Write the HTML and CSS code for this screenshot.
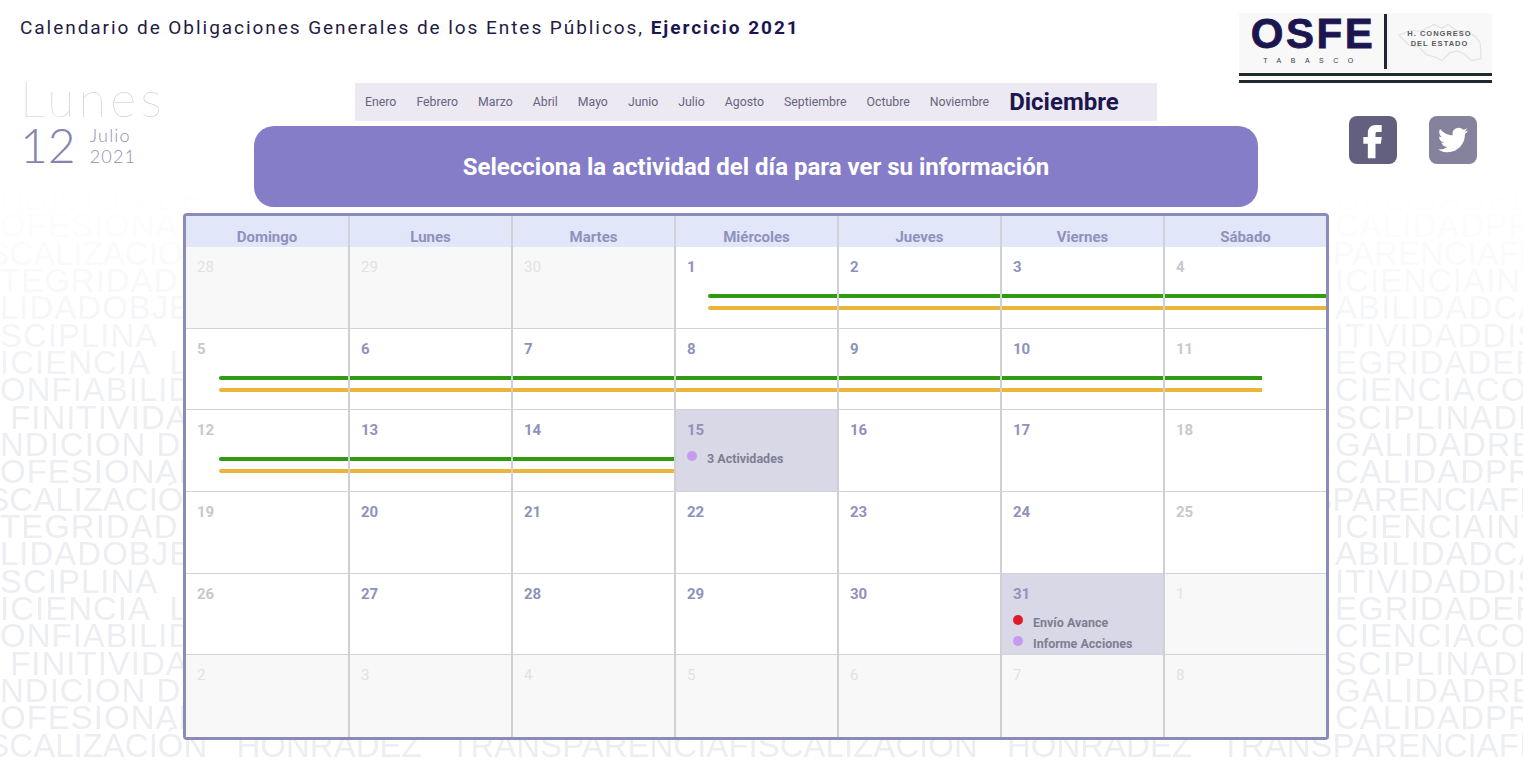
FILE: index.html
```html
<!DOCTYPE html>
<html lang="es">
<head>
<meta charset="utf-8">
<title>Calendario de Obligaciones</title>
<link rel="stylesheet" href="styles.css">
</head>
<body>
<div class="page">
  <div class="watermark" aria-hidden="true">
    <div class="wm-row"><span>NDICION DE</span><span>GALIDADRE</span></div>
    <div class="wm-row"><span>OFESIONAL</span><span>CALIDADPRO</span></div>
    <div class="wm-full">FISCALIZACIÓN HONRADEZ TRANSPARENCIAFISCALIZACIÓN HONRADEZ TRANSPARENCIAFISCALIZACIÓN</div>
    <div class="wm-row"><span>TEGRIDAD L</span><span>ICIENCIAINT</span></div>
    <div class="wm-row"><span>LIDADOBJE</span><span>ABILIDADCA</span></div>
    <div class="wm-row"><span>SCIPLINA &nbsp; I</span><span>ITIVIDADDIS</span></div>
    <div class="wm-row"><span>ICIENCIA &nbsp;LI</span><span>EGRIDADEFI</span></div>
    <div class="wm-row"><span>ONFIABILID</span><span>CIENCIACO</span></div>
    <div class="wm-row"><span>&nbsp;FINITIVIDA</span><span>SCIPLINADE</span></div>
    <div class="wm-row"><span>NDICION DE</span><span>GALIDADRE</span></div>
    <div class="wm-row"><span>OFESIONAL</span><span>CALIDADPRO</span></div>
    <div class="wm-full">FISCALIZACIÓN HONRADEZ TRANSPARENCIAFISCALIZACIÓN HONRADEZ TRANSPARENCIAFISCALIZACIÓN</div>
    <div class="wm-row"><span>TEGRIDAD L</span><span>ICIENCIAINT</span></div>
    <div class="wm-row"><span>LIDADOBJE</span><span>ABILIDADCA</span></div>
    <div class="wm-row"><span>SCIPLINA &nbsp; I</span><span>ITIVIDADDIS</span></div>
    <div class="wm-row"><span>ICIENCIA &nbsp;LI</span><span>EGRIDADEFI</span></div>
    <div class="wm-row"><span>ONFIABILID</span><span>CIENCIACO</span></div>
    <div class="wm-row"><span>&nbsp;FINITIVIDA</span><span>SCIPLINADE</span></div>
    <div class="wm-row"><span>NDICION DE</span><span>GALIDADRE</span></div>
    <div class="wm-row"><span>OFESIONAL</span><span>CALIDADPRO</span></div>
    <div class="wm-full">FISCALIZACIÓN HONRADEZ TRANSPARENCIAFISCALIZACIÓN HONRADEZ TRANSPARENCIAFISCALIZACIÓN</div>
    <div class="wm-last">INTEGRIDAD LEGALIDAD SECRECIA EFICIENCIAINTEGRIDAD LEGALIDAD SECRECIA EFICIENCIAINTEGRIDAD</div>
  </div>

  <header class="top">
    <h1 class="title">Calendario de Obligaciones Generales de los Entes Públicos, <strong>Ejercicio 2021</strong></h1>
    <div class="logo">
      <div class="logo-main">
        <div class="logo-osfe">
          <span class="osfe-word">OSFE</span>
          <span class="osfe-sub">TABASCO</span>
        </div>
        <div class="logo-divider"></div>
        <div class="logo-congreso">
          <svg class="logo-map" viewBox="0 0 90 44" aria-hidden="true"><path d="M2 14 L14 9 L24 10 L38 3 L46 7 L52 3 L60 9 L70 10 L80 15 L85 22 L86 38 L76 40 L70 34 L62 30 L54 32 L46 40 L38 36 L30 34 L22 26 L12 24 Z"/></svg>
          <span class="congreso-text">H. CONGRESO<br>DEL ESTADO</span>
        </div>
      </div>
      <div class="logo-rules"></div>
    </div>
  </header>

  <section class="middle">
    <div class="date">
      <div class="date-day">Lunes</div>
      <div class="date-row">
        <span class="date-num">12</span>
        <span class="date-rest">Julio<br>2021</span>
      </div>
    </div>
    <div class="center">
      <nav class="months">
        <span>Enero</span><span>Febrero</span><span>Marzo</span><span>Abril</span><span>Mayo</span><span>Junio</span><span>Julio</span><span>Agosto</span><span>Septiembre</span><span>Octubre</span><span>Noviembre</span><span class="month-active">Diciembre</span>
      </nav>
      <div class="banner">Selecciona la actividad del día para ver su información</div>
    </div>
    <div class="social">
      <a class="social-btn fb" aria-label="Facebook">
        <svg viewBox="0 0 24 24"><path d="M14.2 8.2h3V4h-3.4C10.6 4 8.9 6 8.9 8.9v2.3H6.2v4.1h2.7V24h4.6v-8.7h3.2l.6-4.1h-3.8V9.3c0-.7.4-1.1 1.1-1.1z" transform="translate(0 -1)"/></svg>
      </a>
      <a class="social-btn tw" aria-label="Twitter">
        <svg viewBox="0 0 24 24"><path d="M23.953 4.57a10 10 0 01-2.825.775 4.958 4.958 0 002.163-2.723c-.951.555-2.005.959-3.127 1.184a4.92 4.92 0 00-8.384 4.482C7.69 8.095 4.067 6.13 1.64 3.162a4.822 4.822 0 00-.666 2.475c0 1.71.87 3.213 2.188 4.096a4.904 4.904 0 01-2.228-.616v.06a4.923 4.923 0 003.946 4.827 4.996 4.996 0 01-2.212.085 4.936 4.936 0 004.604 3.417 9.867 9.867 0 01-6.102 2.105c-.39 0-.779-.023-1.17-.067a13.995 13.995 0 007.557 2.209c9.053 0 13.998-7.496 13.998-13.985 0-.21 0-.42-.015-.63A9.935 9.935 0 0024 4.59z"/></svg>
      </a>
    </div>
  </section>

  <main class="calendar">
    <div class="cal-head">
      <div>Domingo</div><div>Lunes</div><div>Martes</div><div>Miércoles</div><div>Jueves</div><div>Viernes</div><div>Sábado</div>
    </div>
    <div class="week">
      <i class="bar bar-green w1"></i><i class="bar bar-yellow w1"></i>
      <div class="cell out"><b>28</b></div><div class="cell out"><b>29</b></div><div class="cell out"><b>30</b></div>
      <div class="cell"><b>1</b></div><div class="cell"><b>2</b></div><div class="cell"><b>3</b></div><div class="cell off"><b>4</b></div>
    </div>
    <div class="week">
      <i class="bar bar-green w2"></i><i class="bar bar-yellow w2"></i>
      <div class="cell off"><b>5</b></div><div class="cell"><b>6</b></div><div class="cell"><b>7</b></div><div class="cell"><b>8</b></div><div class="cell"><b>9</b></div><div class="cell"><b>10</b></div><div class="cell off"><b>11</b></div>
    </div>
    <div class="week">
      <i class="bar bar-green w3"></i><i class="bar bar-yellow w3"></i>
      <div class="cell off"><b>12</b></div><div class="cell"><b>13</b></div><div class="cell"><b>14</b></div>
      <div class="cell active"><b>15</b><ul class="events"><li class="purple">3 Actividades</li></ul></div>
      <div class="cell"><b>16</b></div><div class="cell"><b>17</b></div><div class="cell off"><b>18</b></div>
    </div>
    <div class="week">
      <div class="cell off"><b>19</b></div><div class="cell"><b>20</b></div><div class="cell"><b>21</b></div><div class="cell"><b>22</b></div><div class="cell"><b>23</b></div><div class="cell"><b>24</b></div><div class="cell off"><b>25</b></div>
    </div>
    <div class="week">
      <div class="cell off"><b>26</b></div><div class="cell"><b>27</b></div><div class="cell"><b>28</b></div><div class="cell"><b>29</b></div><div class="cell"><b>30</b></div>
      <div class="cell active"><b>31</b><ul class="events"><li class="red">Envío Avance</li><li class="purple">Informe Acciones</li></ul></div>
      <div class="cell out"><b>1</b></div>
    </div>
    <div class="week last">
      <div class="cell out"><b>2</b></div><div class="cell out"><b>3</b></div><div class="cell out"><b>4</b></div><div class="cell out"><b>5</b></div><div class="cell out"><b>6</b></div><div class="cell out"><b>7</b></div><div class="cell out"><b>8</b></div>
    </div>
  </main>
</div>
</body>
</html>
```

FILE: styles.css
```css
* { box-sizing: border-box; }
html, body { margin: 0; padding: 0; background: #fff; }
body { font-family: Roboto, "Noto Sans", sans-serif; }

.page { position: relative; width: 1523px; height: 761px; overflow: hidden; }

/* Decorative word texture behind everything */
.watermark {
  position: absolute; left: 0; right: 0; top: 185px; bottom: 0;
  font-family: "Liberation Sans", Arial, sans-serif;
  font-size: 33px; line-height: 27.33px; color: #eceef2;
  white-space: nowrap; overflow: hidden;
  -webkit-mask-image: linear-gradient(to bottom, transparent 0, rgba(0,0,0,.35) 90px, #000 240px);
  mask-image: linear-gradient(to bottom, transparent 0, rgba(0,0,0,.35) 90px, #000 240px);
}
.wm-row { display: grid; grid-template-columns: 1335px 1fr; height: 27.33px; }
.wm-row span { letter-spacing: 1px; }
.wm-full { height: 27.33px; margin-left: -42px; word-spacing: 20px; }
.wm-last { height: 27.33px; margin-left: -24px; font-weight: 700; }

.top, .middle, .calendar { position: relative; }

.top { display: flex; justify-content: space-between; height: 83px; padding: 13px 31px 0 20px; }
.title { margin: 5px 0 0; font-size: 19px; font-weight: 400; line-height: 20px; letter-spacing: 1.95px; color: #1f1b45; }
.title strong { font-weight: 700; color: #1c1650; }

.logo { width: 253px; display: flex; flex-direction: column; }
.logo-main { flex: 1; display: flex; background: #f8f8f8; }
.logo-osfe { width: 145px; display: flex; flex-direction: column; align-items: center; padding-left: 3px; }
.osfe-word { font-family: "Liberation Sans", sans-serif; font-weight: 700; font-size: 42px; line-height: 38px; letter-spacing: 2.5px; color: #1c1650; -webkit-text-stroke: .8px #1c1650; margin-top: 2px; }
.osfe-sub { font-family: "Liberation Sans", sans-serif; font-size: 7px; line-height: 9px; letter-spacing: 9.5px; color: #3a3a4a; margin-top: 3px; }
.logo-divider { width: 3px; background: #1f2430; margin: 1px 0 3px; }
.logo-congreso { flex: 1; position: relative; display: flex; align-items: center; justify-content: center; margin-left: 1px; padding-right: 2px; border-left: 1px solid #eeeeee; }
.logo-map { position: absolute; left: 8px; top: 8px; width: 88px; height: 44px; fill: none; stroke: #e2e2e2; stroke-width: 1.2; }
.congreso-text { position: relative; font-family: "Liberation Sans", sans-serif; font-size: 7.5px; font-weight: 700; line-height: 10px; letter-spacing: 1px; color: #5a5a60; text-align: center; padding-bottom: 7px; }
.logo-rules { height: 10px; border-top: 3px solid #1f2a30; border-bottom: 3px solid #1f2a30; margin-top: 1px; }

.middle { display: flex; height: 130px; }
.date { width: 254px; padding-left: 20px; margin-top: -10px; }
.date-day { font-family: Lato, Roboto, sans-serif; font-size: 50px; font-weight: 100; line-height: 50px; letter-spacing: 4.4px; color: #c9c4d6; }
.date-row { display: flex; gap: 14px; margin-top: -3px; }
.date-num { font-family: Lato, Roboto, sans-serif; font-size: 48px; font-weight: 300; line-height: 50px; color: #8286ad; }
.date-rest { font-family: Lato, Roboto, sans-serif; font-size: 18px; font-weight: 300; line-height: 21px; letter-spacing: 1.2px; color: #8f90ae; padding-top: 5px; }

.center { width: 1004px; display: flex; flex-direction: column; align-items: center; gap: 5px; }
.months { width: 802px; height: 38px; display: flex; align-items: center; gap: 20px; padding-left: 10px; background: #ece9f2; font-size: 12.3px; color: #68647f; white-space: nowrap; }
.month-active { font-size: 24px; font-weight: 700; color: #1c1650; }
.banner { width: 1004px; height: 81px; display: flex; align-items: center; justify-content: center; border-radius: 20px; background: #857dc8; color: #fff; font-size: 24px; font-weight: 700; }

.social { display: flex; gap: 32px; padding: 33px 0 0 91px; }
.social-btn { width: 48px; height: 48px; border-radius: 8px; display: flex; align-items: center; justify-content: center; }
.social-btn svg { fill: #fff; }
.fb { background: #625f7f; }
.fb svg { width: 40px; height: 40px; }
.tw { background: #85829d; }
.tw svg { width: 30px; height: 30px; }

.calendar { margin-left: 183px; width: 1146px; height: 527px; border: 3px solid #8a8bb8; border-radius: 4px; background: #fff; display: flex; flex-direction: column; }
.cal-head, .week { display: grid; grid-template-columns: 164px repeat(5, 163px) 1fr; }
.cal-head { height: 31px; background: #e1e6f8; font-size: 15px; font-weight: 700; color: #8f92bd; text-align: center; }
.cal-head div { padding-top: 12px; line-height: 18px; border-right: 2px solid #d0d1d9; }
.cal-head div:last-child { border-right: 0; }
.week { position: relative; flex: 1; min-height: 0; }
.cell { position: relative; min-width: 0; overflow: hidden; padding: 10px 10px 0 11px; border-right: 2px solid #cfcfd4; border-bottom: 1px solid #d2d2dd; }
.cell:last-child { border-right: 0; }
.week.last .cell { border-bottom: 0; }
.cell b { display: block; font-size: 15px; line-height: 20px; color: #8f92bd; }
.cell.off b { color: #c8c8cd; }
.cell.out { background: #f8f8f8; border-bottom-color: #d2d2dd; }
.cell.out b { color: #e2e2e4; font-weight: 400; }
.cell.active { background: #d8d8e6; }

.events { list-style: none; margin: 8px 0 0; padding: 0; }
.events li { position: relative; padding-left: 20px; font-size: 12.5px; font-weight: 700; line-height: 21px; color: #7e7e92; white-space: nowrap; }
.events li::before { content: ""; position: absolute; left: 0; top: 3px; width: 10px; height: 10px; border-radius: 50%; }
.events .purple::before { background: #c49bf0; }
.events .red::before { background: #dd1c2b; }

/* Spanning activity bars drawn across the week's cells */
.bar { position: absolute; height: 4px; border-radius: 2px 0 0 2px; }
.bar-green { top: 47px; background: #2f9a12; }
.bar-yellow { top: 59px; background: #ecb439; }
.w1 { left: 522px; right: 0; }
.w2 { left: 33px; width: 1043px; }
.w3 { left: 33px; width: 456px; }
```
